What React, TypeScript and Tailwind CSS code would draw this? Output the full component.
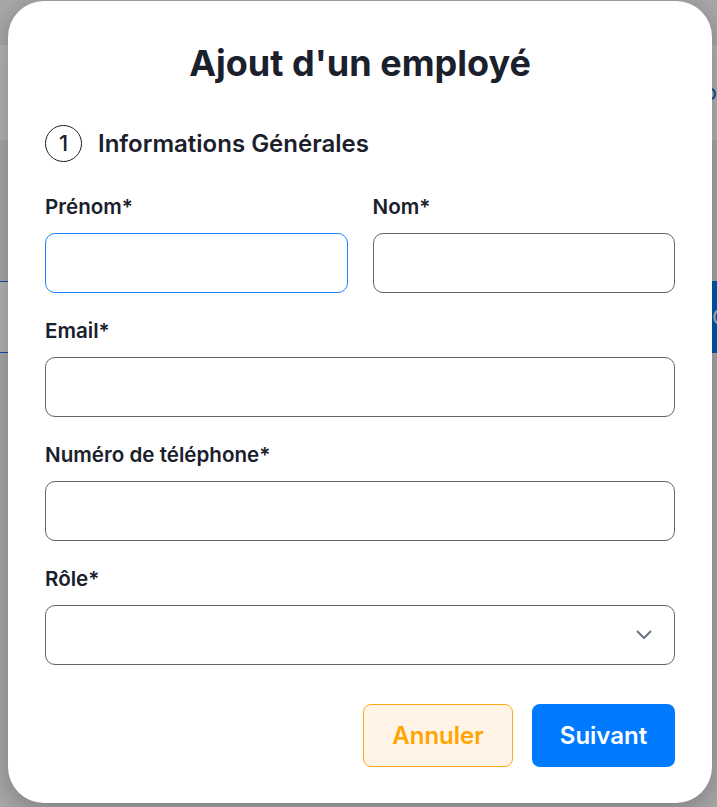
import React from "react";

function Label({ children }: { children: React.ReactNode }) {
  return (
    <div className="mb-[12px] text-[20.6px] leading-[28px] font-semibold text-[#1a202c]">
      {children}
    </div>
  );
}

function Field({ label, focused }: { label: string; focused?: boolean }) {
  return (
    <div className="flex flex-col">
      <Label>{label}</Label>
      <input
        className={
          "h-[60px] w-full rounded-[10px] border bg-white px-4 outline-none " +
          (focused ? "border-[#1a85ff]" : "border-[#666666]")
        }
      />
    </div>
  );
}

export default function App() {
  return (
    <div className="relative h-[807px] w-[717px] overflow-hidden bg-[#f0f0f0] font-['Inter',sans-serif]">
      {/* page behind the modal */}
      <div className="h-[45px]" />
      <div className="flex h-[95px] items-center bg-white">
        <svg width="20" height="20" viewBox="0 0 20 20" className="-ml-[6px] mt-[4px]">
          <path d="M0 16 L13 3" stroke="#0d6efd" strokeWidth="2" fill="none" />
        </svg>
        <span className="ml-[697px] whitespace-nowrap text-[22px] text-[#1565d8]">fo</span>
      </div>
      <div className="mt-[141px] flex h-[72px] -ml-[40px]">
        <div className="w-[751px] shrink-0 border border-[#0d6efd] bg-white" />
        <div className="flex w-[120px] shrink-0 items-center bg-[#007bff] pl-[1px] text-[22px] text-white">
          Chercher
        </div>
      </div>

      {/* overlay */}
      <div className="absolute inset-0 flex items-start bg-black/30 pl-[8px] pt-[1px]">
        <div className="w-[704px] rounded-[36px] bg-white px-[37px] pt-[42px] pb-[36px] shadow-[0_6px_24px_rgba(0,0,0,0.25)]">
          <h1 className="text-center text-[36px] leading-[40px] font-bold text-[#1a202c]">
            Ajout d'un employé
          </h1>

          <div className="mt-[42px] flex h-[37px] items-center">
            <div className="flex h-[37px] w-[37px] items-center justify-center rounded-full border border-[#1a202c] text-[22px] font-medium text-[#1a202c]">
              1
            </div>
            <div className="ml-[16px] text-[24px] font-semibold text-[#1a202c]">
              Informations Générales
            </div>
          </div>

          <div className="mt-[31px] flex flex-col gap-[24px]">
            <div className="grid grid-cols-2 gap-[25px]">
              <Field label="Prénom*" focused />
              <Field label="Nom*" />
            </div>
            <Field label="Email*" />
            <Field label="Numéro de téléphone*" />
            <div className="flex flex-col">
              <Label>Rôle*</Label>
              <div className="flex h-[60px] w-full items-center justify-end rounded-[10px] border border-[#666666] bg-white pr-[22px]">
                <svg width="16" height="10" viewBox="0 0 16 10">
                  <path
                    d="M1.5 1.5 L8 8 L14.5 1.5"
                    stroke="#6b7280"
                    strokeWidth="2"
                    fill="none"
                    strokeLinecap="round"
                    strokeLinejoin="round"
                  />
                </svg>
              </div>
            </div>
          </div>

          <div className="mt-[39px] flex justify-end gap-[19px]">
            <button className="h-[63px] w-[150px] rounded-[8px] border border-[#ffaa1a] bg-[#fff4e5] text-[24px] font-semibold text-[#ffa500]">
              Annuler
            </button>
            <button className="h-[63px] w-[143px] rounded-[8px] bg-[#007bff] text-[24px] font-semibold text-white">
              Suivant
            </button>
          </div>
        </div>
      </div>
    </div>
  );
}
